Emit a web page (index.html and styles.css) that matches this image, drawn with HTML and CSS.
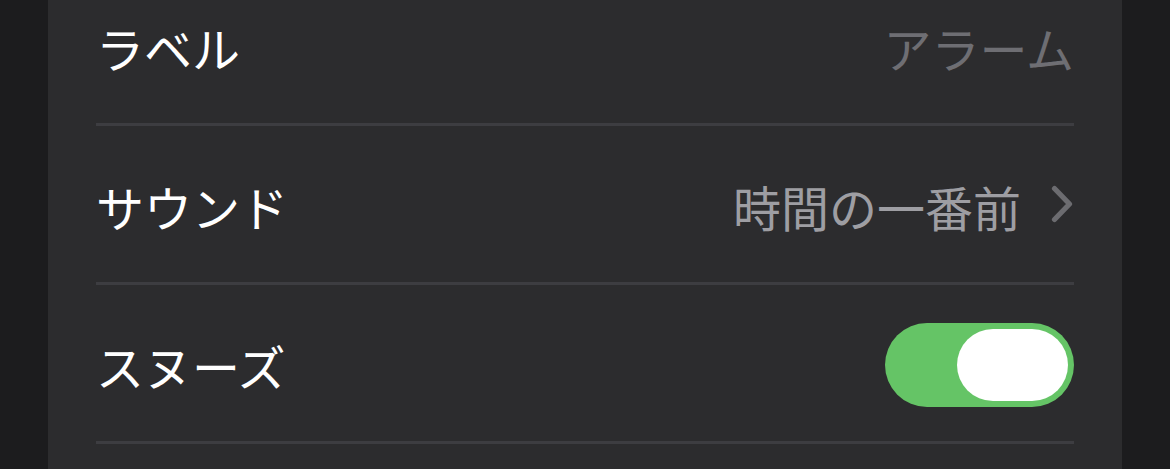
FILE: index.html
```html
<!DOCTYPE html>
<html lang="ja">
<head>
<meta charset="utf-8">
<link rel="stylesheet" href="styles.css">
</head>
<body>
<div class="page">
  <div class="card">
    <div class="list">
      <div class="row">
        <span class="label">ラベル</span>
        <span class="value placeholder">アラーム</span>
      </div>
      <div class="sep"></div>
      <div class="row">
        <span class="label">サウンド</span>
        <span class="value-wrap">
          <span class="value">時間の一番前</span>
          <svg class="chevron" width="22" height="38" viewBox="0 0 22 38"><path d="M3.5 3.5 L18.5 19 L3.5 34.5" fill="none" stroke="#6c6c70" stroke-width="5.2" stroke-linecap="round" stroke-linejoin="round"/></svg>
        </span>
      </div>
      <div class="sep"></div>
      <div class="row">
        <span class="label">スヌーズ</span>
        <span class="toggle"><span class="knob"></span></span>
      </div>
      <div class="sep"></div>
    </div>
  </div>
</div>
</body>
</html>
```

FILE: styles.css
```css
html, body {
  margin: 0;
  padding: 0;
  background: #1c1c1e;
  overflow: hidden;
}
.page {
  width: 1170px;
  height: 469px;
  display: flex;
  justify-content: center;
  overflow: hidden;
}
.card {
  width: 1074px;
  height: 469px;
  background: #2c2c2e;
  padding-left: 48px;
  padding-right: 48px;
  box-sizing: border-box;
}
.list {
  margin-top: -33px;
  display: flex;
  flex-direction: column;
}
.row {
  height: 156px;
  display: flex;
  align-items: center;
  justify-content: space-between;
  font-family: "Noto Sans CJK JP", "Noto Sans", sans-serif;
  font-size: 48px;
}
.label {
  color: #ffffff;
  margin-top: 4px;
}
.value {
  color: #9e9ea3;
}
.placeholder {
  color: #6e6e73;
  margin-top: 4px;
}
.value-wrap {
  display: flex;
  align-items: center;
  gap: 30px;
  margin-top: 4px;
}
.chevron {
  display: block;
  margin-right: 1px;
  margin-top: -4px;
}
.sep {
  height: 3px;
  background: #3d3d41;
}
.toggle {
  width: 189px;
  height: 84px;
  border-radius: 42px;
  background: #65c466;
  display: flex;
  align-items: center;
  justify-content: flex-end;
  padding-right: 6px;
  box-sizing: border-box;
  margin-top: 4px;
}
.knob {
  width: 111px;
  height: 72px;
  border-radius: 36px;
  background: #ffffff;
}
```
